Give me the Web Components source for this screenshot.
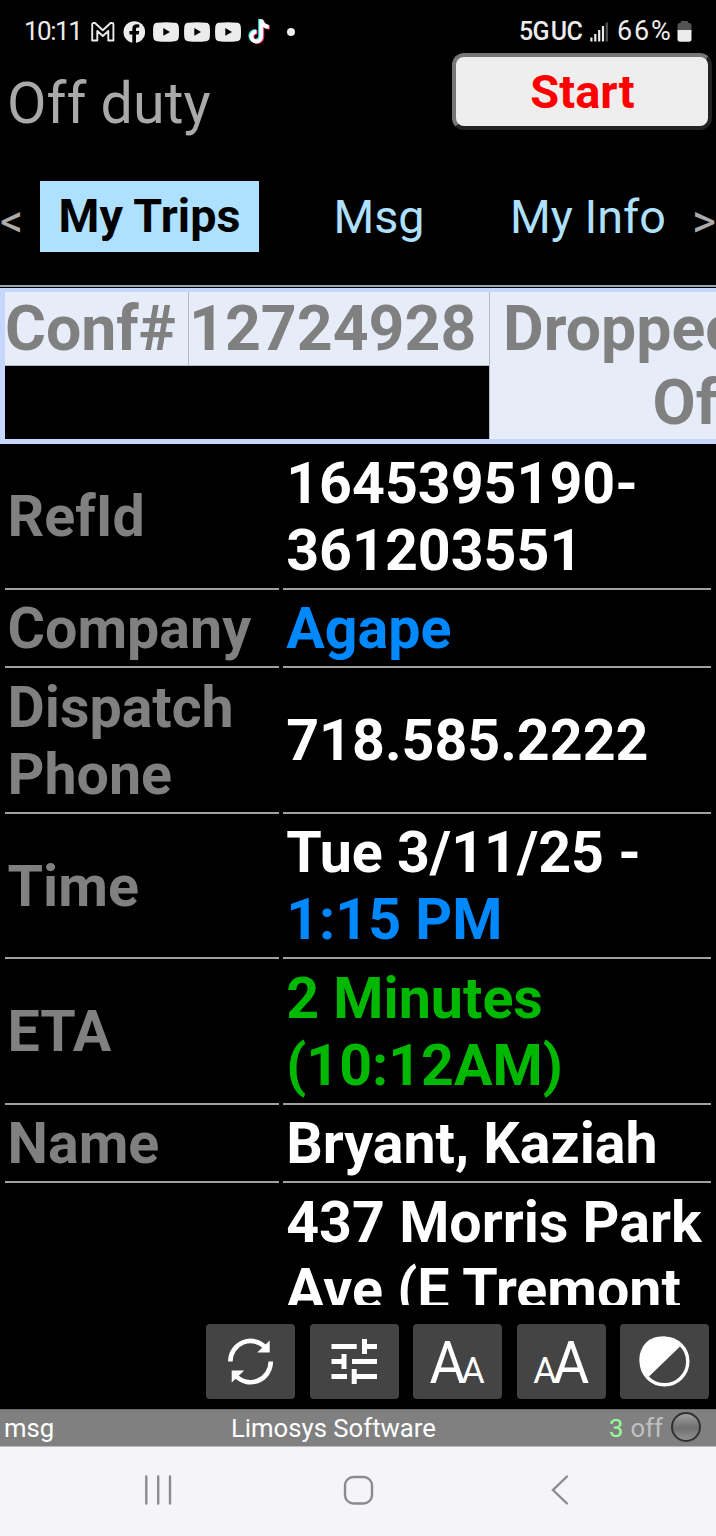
<!DOCTYPE html>
<html lang="en">
<head>
<meta charset="utf-8">
<title>Limosys Software</title>
<style>
    html, body {
        margin: 0;
        height: 1536px;
        overflow: hidden;
        background: #000;
    }
    body {
        font-family: Roboto, "Liberation Sans", sans-serif;
    }
</style>
</head>
<body>
<driver-app></driver-app>

<script>
"use strict";

class BaseComponent extends HTMLElement {
    constructor() {
        super();
        this.attachShadow({mode: "open"});
    }

    connectedCallback() {
        this.shadowRoot.innerHTML = `<style>${this.css}</style>${this.html}`;
    }

    static define(name) {
        customElements.define(name, this);
    }
}

class StatusBar extends BaseComponent {
    get css() {
        return `
            :host { display: flex; justify-content: space-between; box-sizing: border-box;
                height: 53px; padding: 10px 23px 0 24px; color: #ececec; font-size: 26px; line-height: 43px; }
            .side { display: flex; align-items: center; height: 43px; white-space: nowrap; }
            .time { width: 66px; letter-spacing: -1.5px; }
            .net { font-size: 25px; font-weight: 500; letter-spacing: -0.6px; word-spacing: -4px; width: 71px; }
            .pct { width: 60px; font-size: 27px; letter-spacing: 1.800px; }
            svg { display: block; flex: none; }
        `;
    }

    get html() {
        const video = `
            <svg width="31" height="20" viewBox="0 0 31 20">
                <path fill="#ececec" d="M4 .8Q13-.3 22 .8Q25.600 1 25.800 5Q26.200 10 25.800 15Q25.600 19 22 19.200Q13 20.200 4 19.200Q.5 19 .3 15Q-.2 10 .3 5Q.5 1 4 .8z"/>
                <path fill="#000" d="M10.300 6.100L17 10L10.300 13.700z"/>
            </svg>`;
        return `
            <div class="side">
                <span class="time">10:11</span>
                <svg width="33" height="24" viewBox="0 0 33 24">
                    <path fill="none" stroke="#ececec" stroke-width="1.900" stroke-linejoin="round"
                        d="M2.200 20.500V4.300Q2.200 3 3.600 3H5L12.800 10.200L20.600 3H22Q23.400 3 23.400 4.300V20.500H18.300V11L12.800 16L7.300 11V20.500z"/>
                </svg>
                <svg width="29.500" height="24" viewBox="0 0 29.500 24">
                    <circle cx="11.300" cy="12" r="10.800" fill="#ececec"/>
                    <path fill="#000" d="M9.300 23V14.500H6.400V11H9.300V8.800C9.300 5.800 11 4.300 13.700 4.300L16.300 4.500V7.500H14.700C13.400 7.500 13 8.200 13 9.200V11H16.200L15.700 14.500H13V23z"/>
                </svg>
                ${video}${video}${video}
                <svg width="41.500" height="30" viewBox="-2.500 0 41.500 30">
                    <g fill="none" stroke-width="3.900">
                        <path stroke="#25e5df" d="M11.600 2V19A4.900 4.900 0 1 1 7 13.900M11.600 3Q13 8.600 19.300 9.300"/>
                        <path stroke="#f8285b" d="M13.800 3.500V20.500A4.900 4.900 0 1 1 9 15.300M13.800 4Q15 10 21.300 10.700"/>
                        <path stroke="#fff" d="M12.700 2.500V19.700A4.900 4.900 0 1 1 8 14.700M12.700 3Q14 9.300 20.300 10"/>
                    </g>
                </svg>
                <svg width="10" height="10" viewBox="0 0 10 10"><circle cx="4" cy="5" r="4" fill="#ececec"/></svg>
            </div>
            <div class="side">
                <span class="net">5G UC</span>
                <svg width="27" height="20" viewBox="0 0 27 20">
                    <path stroke="#ececec" stroke-width="2.200" d="M1.400 19.500V15.500M5.300 19.500V12M9.200 19.500V8M13 19.500V4"/>
                    <path stroke="#555" stroke-width="2.200" d="M16.800 19.500V.5"/>
                </svg>
                <span class="pct">66%</span>
                <svg width="16" height="21" viewBox="0 0 16 21">
                    <path fill="#555" d="M4.500 0H10Q11 0 11 1V2H12Q14.500 2 14.500 4.500V10H.5V4.500Q.5 2 3 2H3.800V1Q3.800 0 4.500 0z"/>
                    <path fill="#ececec" d="M.5 9H14.500V18Q14.500 20.800 12 20.800H3Q.5 20.800 .5 18z"/>
                </svg>
            </div>
        `;
    }
}
StatusBar.define("status-bar");

class DutyHeader extends BaseComponent {
    get css() {
        return `
            :host { display: flex; justify-content: space-between; height: 128px; padding: 0 4px 0 7px; }
            .state { margin-top: 17px; color: #a9a9a9; font-size: 57.400px; line-height: 67px; }
            button { box-sizing: border-box; width: 260px; height: 77px; padding: 0 0 1px 1px; border: 4px solid;
                border-color: #767676 #222 #222 #767676; border-radius: 12px; background: #eee;
                color: #f00; font: bold 47px Roboto, sans-serif; }
        `;
    }

    get html() {
        return `<div class="state"><slot></slot></div><button>Start</button>`;
    }
}
DutyHeader.define("duty-header");

class TabBar extends BaseComponent {
    get css() {
        return `
            :host { display: grid; grid-template-columns: 40px 219px 240px 178px 39px; height: 104px;
                color: #aee0ff; font-size: 46.700px; line-height: 72px; text-align: center; }
            .active { height: 71px; background: #aee0ff; color: #000; font-weight: bold; line-height: 71px; }
            .arrow { color: #aaa; font-size: 46px; line-height: 81px; text-align: left; }
            .next { text-align: right; }
        `;
    }

    get html() {
        return `
            <span class="arrow">&lt;</span>
            <span class="active">My Trips</span>
            <span>Msg</span>
            <span>My Info</span>
            <span class="arrow next">&gt;</span>
        `;
    }
}
TabBar.define("tab-bar");

class TripSummary extends BaseComponent {
    get css() {
        return `
            :host { display: block; height: 159px; box-sizing: border-box; border-top: 2px solid #93a9b5;
                padding-top: 1px; overflow: hidden; }
            .frame { display: grid; grid-template-columns: 184px 301px 268px; grid-template-rows: 74px 73px;
                box-sizing: border-box; width: 762px; height: 156px; border: 5px solid #c6d7fb; border-top-width: 4px;
                color: #808080; font-size: 62.600px; font-weight: bold; line-height: 74px; white-space: nowrap; }
            .frame > * { background: #e6edf8; box-sizing: border-box; }
            .label, .number { border-bottom: 1px solid #b4bac6; border-right: 1px solid #b4bac6; }
            .blank { grid-column: 1 / 3; grid-row: 2; background: #000; border-right: 1px solid #b4bac6; }
            .status { grid-column: 3; grid-row: 1 / 3; padding-right: 17.500px; text-align: right; }
        `;
    }

    get html() {
        return `
            <div class="frame">
                <div class="label">Conf#</div>
                <div class="number">12724928</div>
                <div class="blank"></div>
                <div class="status">Dropped<br>Off</div>
            </div>
        `;
    }
}
TripSummary.define("trip-summary");

class TripRow extends BaseComponent {
    get css() {
        return `
            :host { display: grid; grid-template-columns: 274px 428px; column-gap: 4px;
                font-size: 57.350px; font-weight: bold; line-height: 66.900px; color: #fff; }
            div { display: flex; align-items: center; padding: 6.800px 0 2.900px 3.200px; border-bottom: 2px solid #a0a0a0;
                white-space: nowrap; }
            .label { padding-left: 2.500px; color: #808080; }
            ::slotted(.green) { color: #00b800; }
        `;
    }

    get html() {
        const label = this.getAttribute("label").replace("|", "<br>");
        return `<div class="label">${label}</div><div><span><slot></slot></span></div>`;
    }
}
TripRow.define("trip-row");

class ToolButton extends BaseComponent {
    get css() {
        return `
            :host { display: flex; align-items: center; justify-content: center; width: 89px; height: 75px;
                border-radius: 4px; background: #444; color: #fff; }
            svg { display: block; font-size: 58.500px; }
        `;
    }

    get html() {
        return `<svg width="89" height="75" viewBox="0 0 89 75">${ToolButton.icons[this.getAttribute("icon")]}</svg>`;
    }
}
ToolButton.icons = {
    refresh: `
        <g fill="none" stroke="#fff" stroke-width="4.600">
            <path d="M24.400 37.500A20.200 20.200 0 0 1 59.500 23.500"/>
            <path d="M64.700 37.500A20.200 20.200 0 0 1 29.500 51.500"/>
        </g>
        <path fill="#fff" d="M63.700 16.500V28.500H51.200z M25.700 58.500V46.500H38.200z"/>`,
    tune: `
        <path fill="none" stroke="#fff" stroke-width="5"
            d="M21.500 22.500H46.700M54.500 15V30M54.500 22.500H67 M21.500 37.500H34M34 30V45M42 37.500H67 M21.500 52.500H37M44.200 45V60M44.200 52.500H67"/>`,
    smaller: `
        <text x="16.500" y="58.500" fill="#fff" textLength="36" lengthAdjust="spacingAndGlyphs">A</text>
        <text x="48.300" y="58.500" fill="#fff" font-size="36">A</text>`,
    larger: `
        <text x="16.300" y="58.500" fill="#fff" font-size="36">A</text>
        <text x="35.700" y="58.500" fill="#fff" textLength="36.500" lengthAdjust="spacingAndGlyphs">A</text>`,
    contrast: `
        <circle cx="44.500" cy="37.500" r="23.300" fill="none" stroke="#fff" stroke-width="3.400"/>
        <path fill="#fff" d="M29 52.500A22 22 0 1 1 60 22.500z"/>`
};
ToolButton.define("tool-button");

class FooterBar extends BaseComponent {
    get css() {
        return `
            :host { display: grid; grid-template-columns: 232px 1fr auto auto auto; box-sizing: border-box; height: 38px;
                padding: 0 15px 0 4px; border-top: 1px solid #696969; border-bottom: 1px solid #bbb;
                background: #808080; color: #fff; font-size: 25.700px; line-height: 37px; }
            .title { margin-left: -5px; }
            .count { color: #98fb98; }
            .off { margin: 0 8px 0 7px; color: #c0c0c0; }
            .lamp { box-sizing: border-box; width: 30px; height: 30px; margin-top: 2px; border: 2px solid #303030; border-radius: 50%;
                background: linear-gradient(#a0a0a0, #747474 48%, #707070 55%, #929292); }
        `;
    }

    get html() {
        return `
            <span>msg</span>
            <span class="title">Limosys Software</span>
            <span class="count">3</span>
            <span class="off">off</span>
            <span class="lamp"></span>
        `;
    }
}
FooterBar.define("footer-bar");

class NavBar extends BaseComponent {
    get css() {
        return `
            :host { display: flex; justify-content: center; gap: 169px; padding: 27px 0 0;
                box-sizing: border-box; flex: 1; background: #f5f5f8; }
            svg { fill: none; stroke: #8b8b8e; stroke-width: 2.400; stroke-linecap: round; }
        `;
    }

    get html() {
        return `
            <svg width="32" height="32" viewBox="0 0 32 32"><path d="M5.300 2.500V29.500M17.200 2.500V29.500M29 2.500V29.500"/></svg>
            <svg width="32" height="32" viewBox="0 0 32 32"><rect x="3" y="3" width="27" height="26.500" rx="8.500"/></svg>
            <svg width="32" height="32" viewBox="0 0 32 32"><path d="M24 2.500L10 16L24 29.500"/></svg>
        `;
    }
}
NavBar.define("nav-bar");

class DriverApp extends BaseComponent {
    get css() {
        return `
            :host { display: flex; flex-direction: column; width: 716px; height: 1536px; overflow: hidden; }
            .trip { height: 861px; padding: 0 5px; overflow: hidden; }
            .tools { display: flex; justify-content: flex-end; gap: 14.500px; height: 75px; padding: 19px 7px 10px 0; }
            .blue { color: #08f; }
        `;
    }

    get html() {
        return `
            <status-bar></status-bar>
            <duty-header>Off duty</duty-header>
            <tab-bar></tab-bar>
            <trip-summary></trip-summary>
            <div class="trip">
                <trip-row label="RefId">1645395190-<br>361203551</trip-row>
                <trip-row label="Company"><span class="blue">Agape</span></trip-row>
                <trip-row label="Dispatch|Phone">718.585.2222</trip-row>
                <trip-row label="Time">Tue 3/11/25 -<br><span class="blue">1:15 PM</span></trip-row>
                <trip-row label="ETA"><span class="green">2 Minutes<br>(10:12AM)</span></trip-row>
                <trip-row label="Name">Bryant, Kaziah</trip-row>
                <trip-row label="">437 Morris Park<br>Ave (E Tremont</trip-row>
            </div>
            <div class="tools">
                <tool-button icon="refresh"></tool-button>
                <tool-button icon="tune"></tool-button>
                <tool-button icon="smaller"></tool-button>
                <tool-button icon="larger"></tool-button>
                <tool-button icon="contrast"></tool-button>
            </div>
            <footer-bar></footer-bar>
            <nav-bar></nav-bar>
        `;
    }
}
DriverApp.define("driver-app");
</script>
</body>
</html>
